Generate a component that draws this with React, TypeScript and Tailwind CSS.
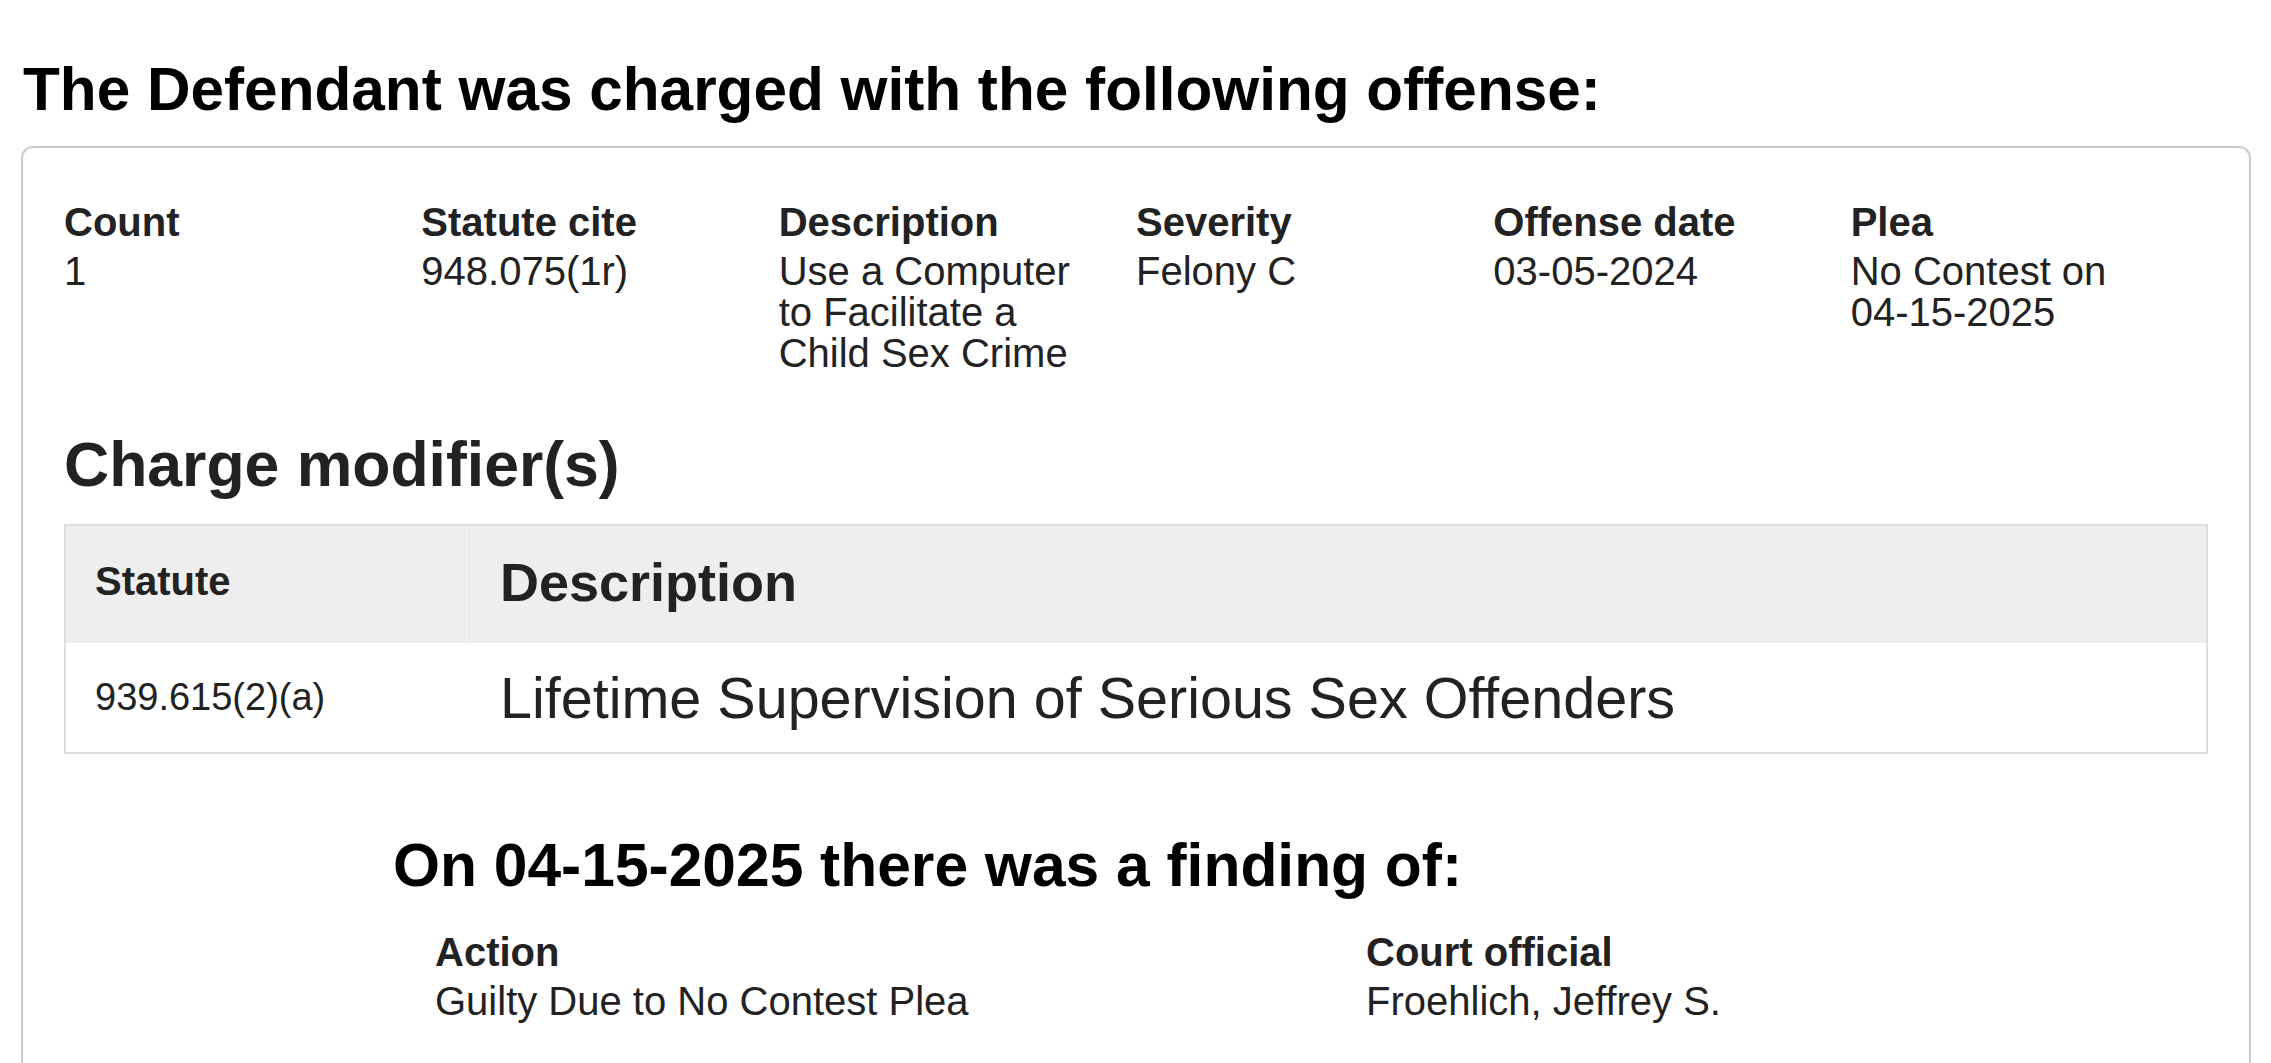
import React from "react";

const CHARGE: { label: string; value: React.ReactNode }[] = [
  { label: "Count", value: "1" },
  { label: "Statute cite", value: "948.075(1r)" },
  { label: "Description", value: "Use a Computer to Facilitate a Child Sex Crime" },
  { label: "Severity", value: "Felony C" },
  { label: "Offense date", value: "03-05-2024" },
  {
    label: "Plea",
    value: (
      <>
        No Contest on <span className="whitespace-nowrap">04-15-2025</span>
      </>
    ),
  },
];

const FINDING = [
  { label: "Action", value: "Guilty Due to No Contest Plea" },
  { label: "Court official", value: "Froehlich, Jeffrey S." },
];

function Field({ label, value }: { label: string; value: React.ReactNode }) {
  return (
    <div className="pr-[30px]">
      <div className="text-[40px] leading-[41px] font-bold text-[#222]">{label}</div>
      <div className="mt-2 text-[40px] leading-[41px] text-[#222]">{value}</div>
    </div>
  );
}

export default function App() {
  return (
    <div className="min-h-screen bg-white font-['Liberation_Sans',Arial,sans-serif] text-[#222] overflow-hidden">
      <div className="pl-[21px] pr-[20px] pt-[56px]">
        {/* Heading */}
        <h2 className="ml-[2px] mb-[24px] text-[60.3px] leading-[66px] font-bold text-black">
          The Defendant was charged with the following offense:
        </h2>

        {/* Charge panel */}
        <div className="border-2 border-[#ccc] rounded-[12px] px-[41px] pt-[54px] pb-[120px]">
          <div className="grid grid-cols-6">
            {CHARGE.map((f) => (
              <Field key={f.label} label={f.label} value={f.value} />
            ))}
          </div>

          <h3 className="mt-[56px] text-[62.5px] leading-[68px] font-bold text-[#222]">
            Charge modifier(s)
          </h3>

          {/* Modifier table */}
          <div className="mt-[26px] border-2 border-[#ddd]">
            <div className="flex h-[117px] bg-[#eee]">
              <div className="w-[404px] flex items-center pl-[29px] pb-[6px] border-r border-[#e6e6e6]">
                <span className="text-[40px] leading-[41px] font-bold">Statute</span>
              </div>
              <div className="flex-1 flex items-center pl-[30px] pb-[6px]">
                <span className="text-[54px] leading-[60px] font-bold">Description</span>
              </div>
            </div>
            <div className="flex h-[109px] bg-white">
              <div className="w-[404px] flex items-center pl-[29px]">
                <span className="text-[38px] leading-[41px]">939.615(2)(a)</span>
              </div>
              <div className="flex-1 flex items-center pl-[30px]">
                <span className="text-[57.5px] leading-[62px]">
                  Lifetime Supervision of Serious Sex Offenders
                </span>
              </div>
            </div>
          </div>

          {/* Finding */}
          <div className="ml-[329px] mt-[78px]">
            <h2 className="text-[60.5px] leading-[66px] font-bold text-black">
              On 04-15-2025 there was a finding of:
            </h2>
            <div className="mt-[34px] ml-[42px] grid grid-cols-[931px_931px]">
              {FINDING.map((f) => (
                <Field key={f.label} label={f.label} value={f.value} />
              ))}
            </div>
          </div>
        </div>
      </div>
    </div>
  );
}
